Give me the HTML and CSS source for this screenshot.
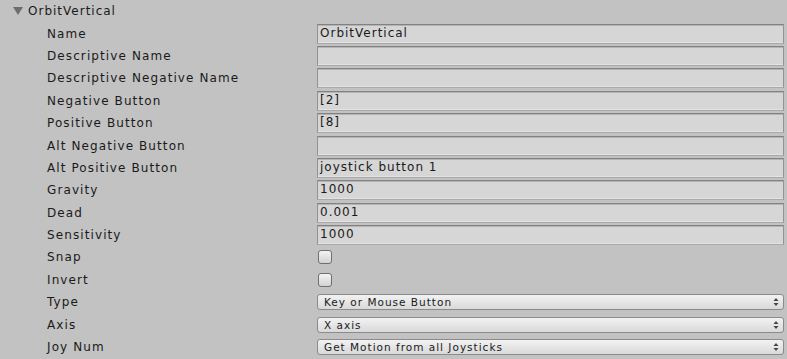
FILE: index.html
```html
<!DOCTYPE html>
<html lang="en">
<head>
  <meta charset="UTF-8">
  <title>Input Axis - OrbitVertical</title>
  <link rel="stylesheet" href="styles.css">
</head>
<body>
  <div class="inspector">
    <div class="foldout">
      <svg class="arrow" viewBox="0 0 10 8" width="10" height="8"><path d="M0 0 H10 L5 8 Z"/></svg>
      <span class="foldout-title">OrbitVertical</span>
    </div>

    <div class="props">
      <div class="row"><label>Name</label><div class="field">OrbitVertical</div></div>
      <div class="row"><label>Descriptive Name</label><div class="field"></div></div>
      <div class="row"><label>Descriptive Negative Name</label><div class="field"></div></div>
      <div class="row"><label>Negative Button</label><div class="field">[2]</div></div>
      <div class="row"><label>Positive Button</label><div class="field">[8]</div></div>
      <div class="row"><label>Alt Negative Button</label><div class="field"></div></div>
      <div class="row"><label>Alt Positive Button</label><div class="field">joystick button 1</div></div>
      <div class="row"><label>Gravity</label><div class="field">1000</div></div>
      <div class="row"><label>Dead</label><div class="field">0.001</div></div>
      <div class="row"><label>Sensitivity</label><div class="field">1000</div></div>
      <div class="row"><label>Snap</label><div class="toggle"></div></div>
      <div class="row"><label>Invert</label><div class="toggle"></div></div>
      <div class="row">
        <label>Type</label>
        <div class="popup"><span>Key or Mouse Button</span><svg class="updown" viewBox="0 0 6 10" width="6" height="10"><path d="M3 1 L5.5 4 H0.5 Z M3 9 L5.5 6 H0.5 Z"/></svg></div>
      </div>
      <div class="row">
        <label>Axis</label>
        <div class="popup"><span>X axis</span><svg class="updown" viewBox="0 0 6 10" width="6" height="10"><path d="M3 1 L5.5 4 H0.5 Z M3 9 L5.5 6 H0.5 Z"/></svg></div>
      </div>
      <div class="row">
        <label>Joy Num</label>
        <div class="popup"><span>Get Motion from all Joysticks</span><svg class="updown" viewBox="0 0 6 10" width="6" height="10"><path d="M3 1 L5.5 4 H0.5 Z M3 9 L5.5 6 H0.5 Z"/></svg></div>
      </div>
    </div>
  </div>
</body>
</html>
```

FILE: styles.css
```css
body {
  margin: 0;
  background: #c2c2c2;
  color: #1a1a1a;
  font-family: 'DejaVu Sans', Verdana, sans-serif;
  font-size: 12px;
}

.inspector {
  width: 787px;
  height: 359px;
  overflow: hidden;
}

.foldout {
  height: 22.4px;
  display: flex;
  align-items: center;
  padding-left: 13px;
  gap: 5px;
}

.arrow {
  fill: #6e6e6e;
}

.foldout-title {
  letter-spacing: 1px;
}

.row {
  height: 22.4px;
  display: grid;
  grid-template-columns: 270px 1fr;
  align-items: center;
  padding: 0 3px 0 47px;
}

label {
  letter-spacing: 1.1px;
  white-space: nowrap;
}

/* Text field */
.field {
  height: 20px;
  box-sizing: border-box;
  background: #d6d6d6;
  border: 1px solid #939393;
  border-top-color: #828282;
  border-bottom-color: #a9a9a9;
  box-shadow: inset 0 1px 0 #b4b4b4, inset 0 -1px 0 #e3e3e3;
  padding: 0 2px;
  line-height: 17px;
  letter-spacing: 1px;
  white-space: nowrap;
}

/* Toggle */
.toggle {
  width: 14px;
  height: 14px;
  box-sizing: border-box;
  margin-left: 1px;
  border: 1px solid #6f6f6f;
  border-radius: 3px;
  background: linear-gradient(#f4f4f4, #d2d2d2);
}

/* Popup */
.popup {
  height: 16px;
  box-sizing: border-box;
  display: flex;
  align-items: center;
  justify-content: space-between;
  border: 1px solid #8b8b8b;
  border-radius: 3px;
  background: linear-gradient(#f2f2f2, #d9d9d9);
  padding: 0 4px 0 6px;
  font-size: 10.5px;
  letter-spacing: 1px;
}

.updown {
  fill: #444;
}
```
